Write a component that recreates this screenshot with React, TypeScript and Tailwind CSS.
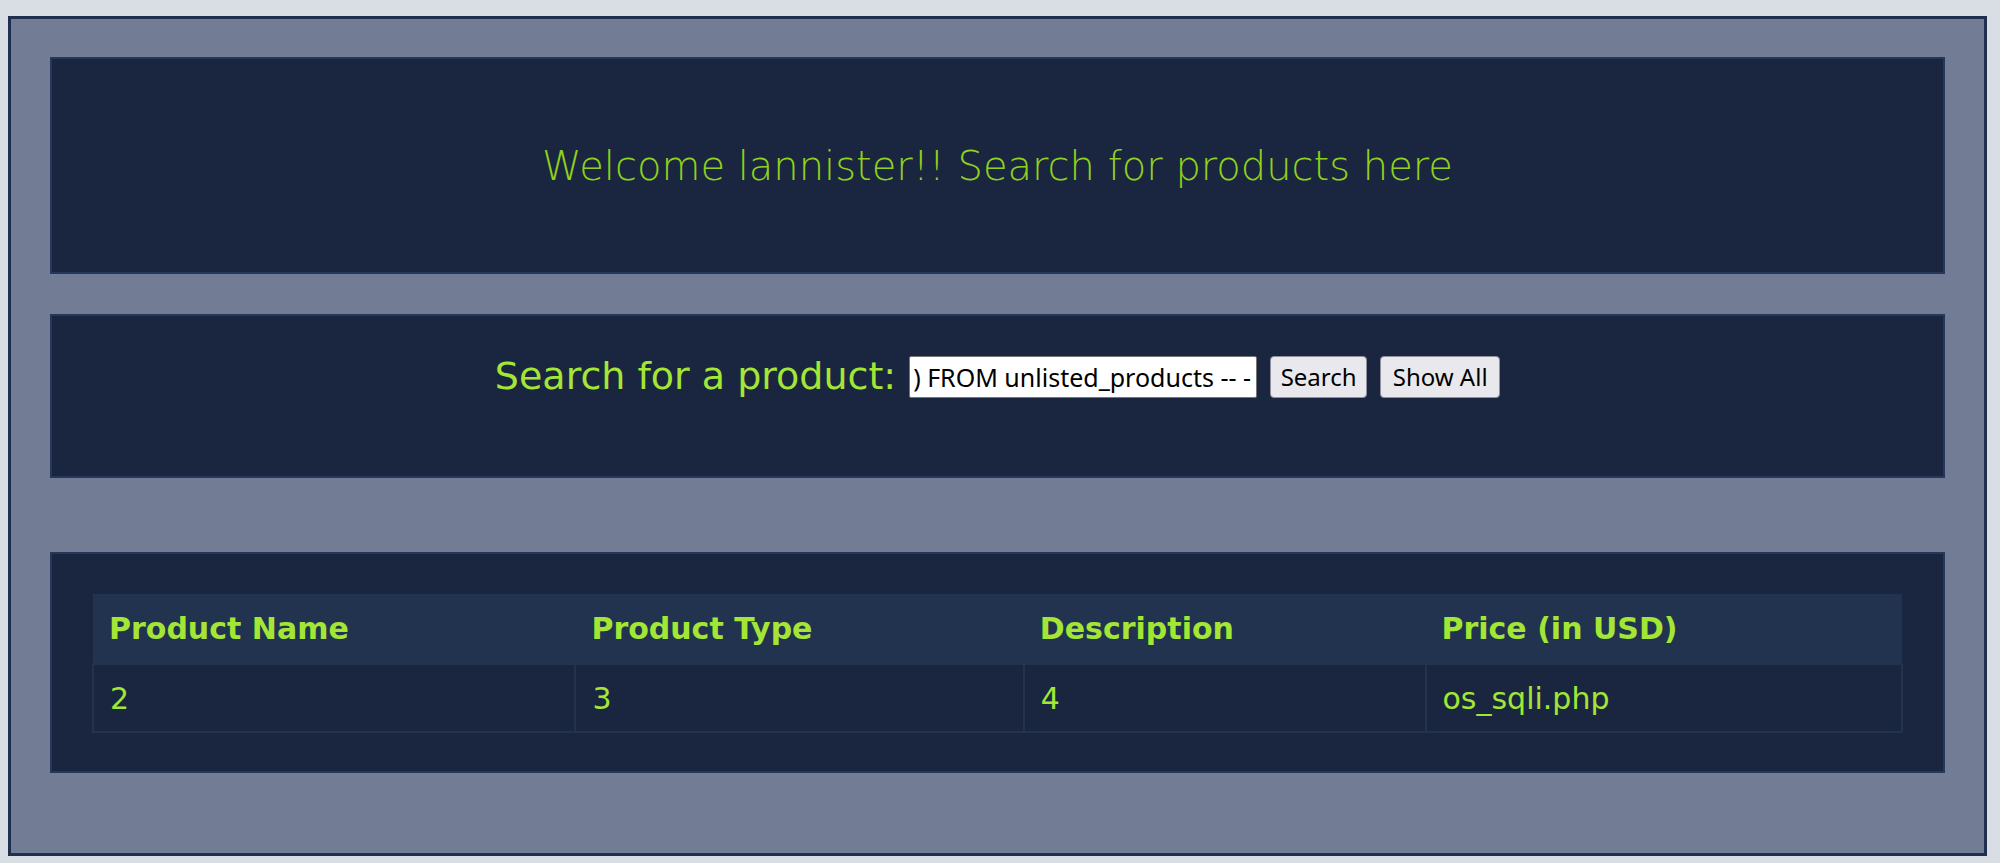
import React from "react";

export default function App() {
  const cols = ["Product Name", "Product Type", "Description", "Price (in USD)"];
  const row = ["2", "3", "4", "os_sqli.php"];
  const widths = ["w-[483px]", "w-[449px]", "w-[402px]", "w-[477px]"];
  return (
    <div className="min-h-[863px] w-[2000px] bg-[#d9dde4] pt-[16px] pl-[8px]" style={{ fontFamily: '"DejaVu Sans", sans-serif' }}>
      <div className="w-[1979px] h-[840px] border-[3px] border-[#1e2f50] bg-[#727d95] px-[39px] pt-[38px]">
        <div className="h-[217px] bg-[#1a2640] border-2 border-[#25375a] flex items-center justify-center">
          <h1 className="text-[40px] font-extralight text-[#8fd11c] leading-none">Welcome lannister!! Search for products here</h1>
        </div>
        <div className="mt-[40px] h-[164px] bg-[#1a2640] border-2 border-[#25375a] pt-[40px] flex justify-center items-start">
          <div className="flex items-center h-[42px]">
            <span className="text-[38px] text-[#a3e635] leading-none mr-[13px] -mt-[3px]">Search for a product:</span>
            <input
              readOnly
              value=") FROM unlisted_products -- -"
              className="w-[348px] h-[42px] bg-white border border-[#767676] rounded-[2px] px-[3px] text-[25px] text-black outline-none"
              style={{ fontFamily: '"Noto Sans", sans-serif' }}
            />
            <button className="ml-[13px] h-[42px] w-[97px] bg-[#e9e9ed] border border-[#8f8f9d] rounded-[4px] text-[24px] text-black" style={{ fontFamily: '"Noto Sans", sans-serif' }}>Search</button>
            <button className="ml-[13px] h-[42px] w-[120px] bg-[#e9e9ed] border border-[#8f8f9d] rounded-[4px] text-[24px] text-black" style={{ fontFamily: '"Noto Sans", sans-serif' }}>Show All</button>
          </div>
        </div>
        <div className="mt-[74px] h-[221px] bg-[#1a2640] border-2 border-[#25375a] px-[40px] pt-[40px]">
          <table className="border-collapse w-[1811px]">
            <thead>
              <tr className="bg-[#22334f] h-[70px]">
                {cols.map((c, i) => (
                  <th key={c} className={`${widths[i]} text-left pl-[16px] text-[30px] font-bold text-[#a3e635]`}>{c}</th>
                ))}
              </tr>
            </thead>
            <tbody>
              <tr className="h-[68px]">
                {row.map((c, i) => (
                  <td key={i} className={`${widths[i]} border-2 border-[#22334f] pl-[16px] text-[30px] text-[#a3e635]`}>{c}</td>
                ))}
              </tr>
            </tbody>
          </table>
        </div>
      </div>
    </div>
  );
}
